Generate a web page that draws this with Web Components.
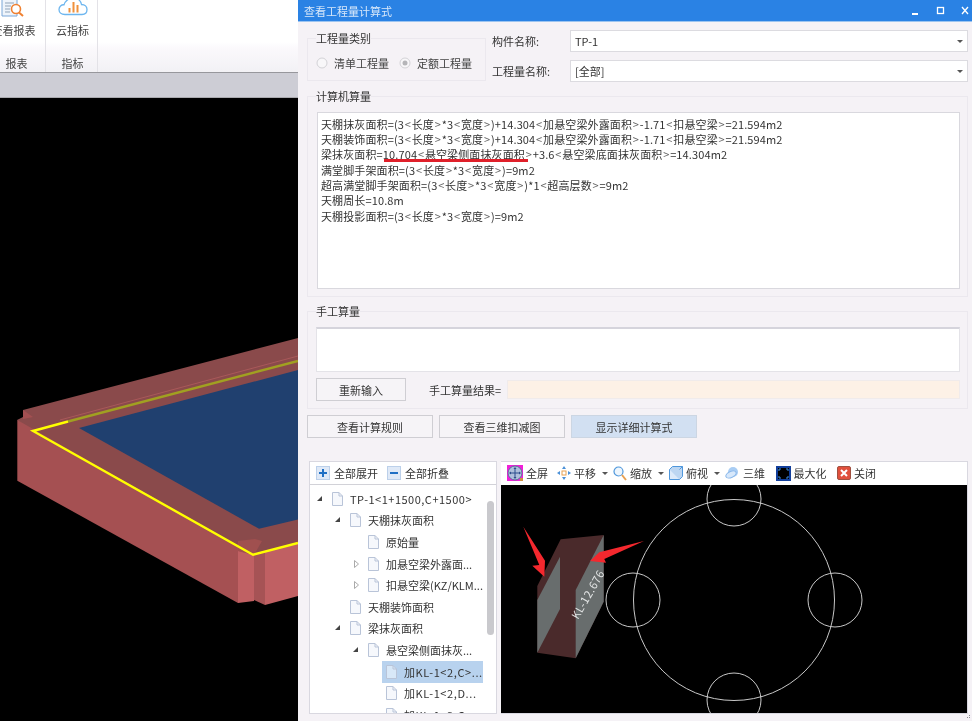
<!doctype html>
<html lang="zh">
<head>
<meta charset="utf-8">
<title>查看工程量计算式</title>
<style>
  html, body { margin: 0; width: 972px; height: 721px; overflow: hidden; background: #000; }
  body { font: 11px "Noto Sans CJK SC", "Liberation Sans", sans-serif; color: #333; }
  /* the reference is a slightly soft, upscaled capture */
  #page { display: grid; grid-template-columns: 298px 674px; height: 721px; filter: blur(.35px); }
  #left { display: flex; flex-direction: column; height: 721px; min-width: 0; }
</style>
</head>
<body>
<div id="page">
  <div id="left">
    <app-ribbon>
      <ribbon-group name="报表" label="查看报表" width="46" pad="padding-right:12px" style="--label-shift:-6px">
        <svg slot="icon" width="26" height="20" viewBox="0 0 26 20" style="margin-left:-12px">
          <path d="M4 -3H19V16H4Z" fill="#eef4fb" stroke="#7aa7d8"/>
          <path d="M7 3H16M7 6H13M7 9H12M7 12H12" stroke="#8fa3b8"/>
          <circle cx="18" cy="9" r="4.500" fill="#fff" stroke="#f08030" stroke-width="1.600"/>
          <path d="M21 12.500L25 16" stroke="#f08030" stroke-width="2"/>
        </svg>
      </ribbon-group>
      <ribbon-group name="指标" label="云指标" width="52" pad="padding-left:2px">
        <svg slot="icon" width="30" height="20" viewBox="0 0 30 20">
          <path d="M7 14.500C3 14.500 1 12 1 9.500C1 6.500 3.500 4.500 6 4.800C7 1 11 -2 15 -2C20 -2 23 1 23.500 4.500C27 4.500 29 7 29 9.500C29 12.500 27 14.500 24 14.500Z" fill="#fff" stroke="#6db6ef" stroke-width="1.300"/>
          <path d="M11.500 8V12.500M15.500 2V12.500M19.500 5V12.500" stroke="#f0913c" stroke-width="2"/>
        </svg>
      </ribbon-group>
    </app-ribbon>
    <model-scene></model-scene>
  </div>
  <calc-dialog heading="查看工程量计算式">
    <div slot="top" style="display:contents">
      <group-box label="工程量类别" style="margin-top:8px;height:43px">
        <div style="display:flex;padding:9px 0 0 8px;gap:10px">
          <ui-radio>清单工程量</ui-radio>
          <ui-radio checked>定额工程量</ui-radio>
        </div>
      </group-box>
      <div style="display:grid;gap:8px">
        <combo-field label="构件名称:" value="TP-1"></combo-field>
        <combo-field label="工程量名称:" value="[全部]"></combo-field>
      </div>
    </div>
    <group-box slot="computed" label="计算机算量" style="height:201px">
      <formula-box>
        <formula-line text="天棚抹灰面积=(3<长度>*3<宽度>)+14.304<加悬空梁外露面积>-1.71<扣悬空梁>=21.594m2"></formula-line>
        <formula-line text="天棚装饰面积=(3<长度>*3<宽度>)+14.304<加悬空梁外露面积>-1.71<扣悬空梁>=21.594m2"></formula-line>
        <formula-line text="梁抹灰面积=[10.704<悬空梁侧面抹灰面积>]+3.6<悬空梁底面抹灰面积>=14.304m2"></formula-line>
        <formula-line text="满堂脚手架面积=(3<长度>*3<宽度>)=9m2"></formula-line>
        <formula-line text="超高满堂脚手架面积=(3<长度>*3<宽度>)*1<超高层数>=9m2"></formula-line>
        <formula-line text="天棚周长=10.8m"></formula-line>
        <formula-line text="天棚投影面积=(3<长度>*3<宽度>)=9m2"></formula-line>
      </formula-box>
    </group-box>
    <group-box slot="manual" label="手工算量" style="height:98px">
      <manual-input></manual-input>
    </group-box>
    <div slot="actions" style="display:contents">
      <ui-button>查看计算规则</ui-button>
      <ui-button>查看三维扣减图</ui-button>
      <ui-button active>显示详细计算式</ui-button>
    </div>
    <tree-panel slot="tree">
      <tree-row level="0" toggle="open" style="letter-spacing:.5px">TP-1&lt;1+1500,C+1500&gt;</tree-row>
      <tree-row level="1" toggle="open">天棚抹灰面积</tree-row>
      <tree-row level="2">原始量</tree-row>
      <tree-row level="2" toggle="closed">加悬空梁外露面...</tree-row>
      <tree-row level="2" toggle="closed">扣悬空梁(KZ/KLM...</tree-row>
      <tree-row level="1">天棚装饰面积</tree-row>
      <tree-row level="1" toggle="open">梁抹灰面积</tree-row>
      <tree-row level="2" toggle="open">悬空梁侧面抹灰...</tree-row>
      <tree-row level="3" selected style="letter-spacing:.6px">加KL-1&lt;2,C&gt;...</tree-row>
      <tree-row level="3" style="letter-spacing:.6px">加KL-1&lt;2,D...</tree-row>
      <tree-row level="3" style="letter-spacing:.6px">加KL-1&lt;3,C...</tree-row>
    </tree-panel>
    <section-view slot="view"></section-view>
  </calc-dialog>
</div>

<script>
// small helper so each element only declares its css and markup
function shadow(el, css, html) {
  el.attachShadow({ mode: "open" }).innerHTML = "<style>" + css + "</style>" + html;
}

class AppRibbon extends HTMLElement {
  connectedCallback() {
    shadow(this, `
      :host { display: block; flex: none; }
      .bar { display: flex; height: 72px; border-bottom: 1px solid #97979c;
        background: linear-gradient(#fff 0, #fff 42px, #fbf9fc 48px, #f2f1f5 72px); }
      .strip { height: 24px; background: #cdcdd5; border-bottom: 1px solid #a9a9ae; }
    `, `<div class="bar"><slot></slot></div><div class="strip"></div>`);
  }
}

class RibbonGroup extends HTMLElement {
  connectedCallback() {
    shadow(this, `
      :host { display: flex; flex-direction: column; align-items: center; overflow: hidden;
        width: ${this.getAttribute("width")}px; border-right: 1px solid #e3e2e7; box-sizing: border-box;
        color: #444; font-size: 11px; ${this.getAttribute("pad") || ""} }
      .icon { height: 21px; display: block; }
      .label { margin-top: 1px; margin-left: var(--label-shift, 0); line-height: 16px; white-space: nowrap; }
      .name { margin-top: 17px; line-height: 16px; white-space: nowrap; }
    `, `<div class="icon"><slot name="icon"></slot></div>
        <div class="label">${this.getAttribute("label")}</div><div class="name">${this.getAttribute("name")}</div>`);
  }
}

class ModelScene extends HTMLElement {
  connectedCallback() {
    shadow(this, `
      :host { display: block; flex: 1; background: #000; min-height: 0; }
      svg { display: block; }
    `, `<svg width="298" height="623" viewBox="0 98 298 623">
      <polygon points="17,420 23,417 23,410 298,338 298,545 254,556 33,433" fill="#8a4a4b"/>
      <polygon points="23,410 33,417 23,419" fill="#a35052"/>
      <line x1="60" y1="420" x2="298" y2="356" stroke="#a9595a"/>
      <polygon points="79,428 298,370 298,519.500 259,528.700" fill="#20406f"/>
      <polygon points="17.300,420 254,555 238,603 17.300,480.700" fill="#a55052"/>
      <polygon points="238,551 254,555 254,601 238,603" fill="#c06063"/>
      <polygon points="238,541 255,539 262,541 254,555 238,551" fill="#a0504f"/>
      <polygon points="254,555 265,552 265,605 254,600" fill="#a65355"/>
      <polygon points="265,552 298,543 298,596 265,605" fill="#c06063"/>
      <polyline points="68,421.500 298,361" fill="none" stroke="#a1a021" stroke-width="2.400"/>
      <polyline points="68,421.500 33,431 253,554.700 298,543" fill="none" stroke="#ffff00" stroke-width="2.400"/>
    </svg>`);
  }
}

class CalcDialog extends HTMLElement {
  connectedCallback() {
    shadow(this, `
      :host { display: block; position: relative; background: #f5f2f6; height: 721px; font-size: 11px; color: #333; }
      .title { height: 21px; background: #2a82e4; border-bottom: 1px solid #9cc4f0; display: flex; align-items: center;
        padding: 0 0 0 6px; color: #d8e8fa; }
      .title span { flex: 1; }
      .title svg { display: block; }
      .top { display: grid; grid-template-columns: 179px 1fr; column-gap: 6px; padding: 8px 4px 0 9px; height: 51px; }
      .stack { display: grid; padding: 15px 4px 0 9px; gap: 14px; }
      .actions { display: flex; gap: 6px; padding: 6px 0 0 9px; }
      .bottom { display: grid; grid-template-columns: 188px 467px; column-gap: 4px; padding: 23px 0 0 11px; height: 253px; }
      .grip { position: absolute; right: 1px; bottom: 1px; display: block; }
    `, `<div class="title"><span>${this.getAttribute("heading")}</span>
          <svg width="64" height="12" viewBox="0 0 64 12" fill="none" stroke="#fff">
            <path d="M4 9H10" stroke-width="2"/>
            <rect x="29.500" y="2.500" width="6" height="6" stroke-width="1.300"/>
            <path d="M54 2L60 9M60 2L54 9" stroke-width="1.300"/>
          </svg></div>
        <div class="top"><slot name="top"></slot></div>
        <div class="stack"><slot name="computed"></slot><slot name="manual"></slot></div>
        <div class="actions"><slot name="actions"></slot></div>
        <div class="bottom"><slot name="tree"></slot><slot name="view"></slot></div>
        <svg class="grip" width="5" height="5" viewBox="0 0 5 5" fill="#8d8d92"><rect x="3" width="1" height="1"/><rect x="1" y="2" width="1" height="1"/><rect x="3" y="2" width="1" height="1"/></svg>`);
  }
}

class GroupBox extends HTMLElement {
  connectedCallback() {
    shadow(this, `
      :host { display: block; box-sizing: border-box; border: 1px solid #ebe8ee; }
      .legend { display: block; width: fit-content; margin: -8px 0 0 8px; padding: 0; background: #f5f2f6;
        line-height: 15px; height: 15px; color: #333; }
    `, `<span class="legend">${this.getAttribute("label")}</span><slot></slot>`);
  }
}

class UiRadio extends HTMLElement {
  connectedCallback() {
    const dot = this.hasAttribute("checked") ? `<circle cx="6" cy="6" r="2.500" fill="#b5b5b8"/>` : "";
    shadow(this, `
      :host { display: flex; align-items: center; gap: 6px; line-height: 16px; color: #444; }
      svg { display: block; }
    `, `<svg width="12" height="12" viewBox="0 0 12 12">
          <circle cx="6" cy="6" r="5" fill="#f8f7f9" stroke="#d3d2d6"/>${dot}</svg><slot></slot>`);
  }
}

class ComboField extends HTMLElement {
  connectedCallback() {
    shadow(this, `
      :host { display: grid; grid-template-columns: 78px 1fr; align-items: center; height: 22px; }
      .box { height: 22px; box-sizing: border-box; border: 1px solid #dcdbe0; background: #fff; display: flex;
        align-items: center; padding: 0 4px; justify-content: space-between; }
      .caret { width: 0; height: 0; border: 3px solid transparent; border-top: 3px solid #555; border-bottom: 0; }
    `, `<span>${this.getAttribute("label")}</span>
        <div class="box"><span>${this.getAttribute("value")}</span><i class="caret"></i></div>`);
  }
}

class FormulaBox extends HTMLElement {
  connectedCallback() {
    shadow(this, `
      :host { display: block; box-sizing: border-box; margin: 8px 7px 0 9px; height: 177px;
        background: #fff; border: 1px solid #d9d8de; padding: 3.500px 0 0 3px; }
    `, `<slot></slot>`);
  }
}

// text attribute: <..> get wider spacing, [..] gets the red mark under it
class FormulaLine extends HTMLElement {
  connectedCallback() {
    const html = this.getAttribute("text")
      .replace(/[<>]/g, (m) => "<b>" + (m === "<" ? "&lt;" : "&gt;") + "</b>")
      .replace("[", '<span class="mark">')
      .replace("]", "<i></i></span>");
    shadow(this, `
      :host { display: block; height: 15.400px; line-height: 15.400px; white-space: nowrap; color: #333;
        font-size: 11px; letter-spacing: .12px; }
      b { font-weight: normal; padding: 0 .75px; color: #666; }
      .mark { position: relative; }
      .mark i { position: absolute; left: 1px; right: 5px; top: 13px; height: 2.400px; background: #e0202a; }
    `, html);
  }
}

class ManualInput extends HTMLElement {
  connectedCallback() {
    shadow(this, `
      :host { display: block; padding: 8px 7px 0 8px; }
      .area { height: 45px; box-sizing: border-box; background: #fff; border: 1px solid #e4e3e8; border-top: 2px solid #d5d4dc; }
      .row { display: flex; align-items: center; margin-top: 6px; }
      button { width: 90px; height: 23px; box-sizing: border-box; background: #f6f4f7; border: 1px solid #cfced3;
        font: inherit; color: #333; padding: 0; }
      .lab { margin-left: 23px; width: 78px; }
      .res { flex: 1; height: 19px; box-sizing: border-box; background: #fdf1e6; border: 1px solid #f0ebeb; }
    `, `<div class="area"></div>
        <div class="row"><button>重新输入</button><span class="lab">手工算量结果=</span><div class="res"></div></div>`);
  }
}

class UiButton extends HTMLElement {
  connectedCallback() {
    const on = this.hasAttribute("active");
    shadow(this, `
      :host { display: block; }
      button { display: block; width: 126px; height: 23px; padding: 0; box-sizing: border-box; font: inherit; color: #333;
        background: ${on ? "#d2e0f2" : "#f6f4f7"}; border: 1px solid ${on ? "#ccd6e3" : "#cfced3"}; }
    `, `<button><slot></slot></button>`);
  }
}

class TreePanel extends HTMLElement {
  connectedCallback() {
    shadow(this, `
      :host { display: block; height: 253px; box-sizing: border-box; border: 1px solid #d9d8e0; background: #fff;
        overflow: hidden; position: relative; }
      .tools { display: flex; align-items: center; height: 23px; border-bottom: 1px solid #d2d2d8; box-sizing: border-box;
        padding: 0 0 1px 6px; gap: 9px; background: #fff; }
      .tool { display: flex; align-items: center; gap: 4px; }
      svg { display: block; }
      .rows { padding: 3px 13px 0 0; }
      .thumb { position: absolute; left: 177px; top: 39px; width: 7px; height: 134px; border-radius: 4px; background: #c9c9cd; }
    `, `<div class="tools">
          <span class="tool"><svg width="14" height="14" viewBox="0 0 14 14"><rect x=".5" y=".5" width="13" height="13" fill="#dfe9f7" stroke="#bcd0ea"/><path d="M7 3V11M3 7H11" stroke="#1f6fc4" stroke-width="2"/></svg>全部展开</span>
          <span class="tool"><svg width="14" height="14" viewBox="0 0 14 14"><rect x=".5" y=".5" width="13" height="13" fill="#dfe9f7" stroke="#bcd0ea"/><path d="M3 7H11" stroke="#1f6fc4" stroke-width="2"/></svg>全部折叠</span>
        </div>
        <div class="rows"><slot></slot></div><div class="thumb"></div>`);
  }
}

class TreeRow extends HTMLElement {
  connectedCallback() {
    const level = Number(this.getAttribute("level")) || 0;
    const toggle = this.getAttribute("toggle");
    const sel = this.hasAttribute("selected");
    let arrow = "";
    if (toggle === "open") arrow = `<path d="M7 2V7H2Z" fill="#444"/>`;
    if (toggle === "closed") arrow = `<path d="M3.500 1.500L7.500 5L3.500 8.500Z" fill="#fff" stroke="#aaa"/>`;
    shadow(this, `
      :host { display: flex; align-items: center; height: 21.600px; padding-left: ${5 + level * 18}px; white-space: nowrap; }
      .arrow { width: 17px; flex: none; display: block; }
      .item { flex: 1; display: flex; align-items: center; gap: 7px; height: 22px; margin-left: -4px; padding-left: 4px;
        background: ${sel ? "#b8d2ee" : "transparent"}; min-width: 0; overflow: hidden; }
      .file { flex: none; display: block; }
    `, `<svg class="arrow" width="17" height="10" viewBox="0 0 17 10">${arrow}</svg>
        <div class="item">
          <svg class="file" width="11" height="14" viewBox="0 0 11 14">
            <path d="M.5 .5H7L10.500 4V13.500H.5Z" fill="${sel ? "#d8e8f8" : "#f6f8fc"}" stroke="#b9c4d8"/>
            <path d="M7 .5V4H10.500" fill="none" stroke="#b9c4d8"/>
          </svg><span><slot></slot></span>
        </div>`);
  }
}

class SectionView extends HTMLElement {
  connectedCallback() {
    const caret = `<i class="caret"></i>`;
    shadow(this, `
      :host { display: flex; flex-direction: column; height: 253px; box-sizing: border-box; border: 1px solid #d9d8e0; border-left: 0; overflow: hidden; }
      .tools { display: flex; align-items: center; height: 23px; box-sizing: border-box; flex: none; background: #fff; padding: 0 0 1px 6px; color: #333; }
      .tool { display: flex; align-items: center; gap: 3px; margin-right: 9px; }
      .tool.c { margin-right: 5px; }
      .tool.w { margin-right: 10.500px; }
      .caret { width: 0; height: 0; border: 3px solid transparent; border-top: 3px solid #555; border-bottom: 0; margin-left: 3px; }
      svg { display: block; }
      .canvas { flex: 1; background: #000; min-height: 0; }
    `, `<div class="tools">
        <span class="tool"><svg width="16" height="16" viewBox="0 0 16 16"><rect width="16" height="16" fill="#f01fd8"/><circle cx="8" cy="8" r="7" fill="#aebfdc" stroke="#5a7098"/><path d="M8 3.500V12.500M3.500 8H12.500" stroke="#2b4c8c"/><path d="M8 2L6.500 4H9.500ZM8 14L6.500 12H9.500ZM2 8L4 6.500V9.500ZM14 8L12 6.500V9.500Z" fill="#2b4c8c"/><rect x="13" y="13" width="3" height="3" fill="#d09040"/></svg>全屏</span>
        <span class="tool c"><svg width="14" height="14" viewBox="0 0 14 14"><rect x="5" y="5" width="4" height="4" fill="#fff" stroke="#e8a050"/><path d="M7 0L5 3H9ZM7 14L5 11H9ZM0 7L3 5V9ZM14 7L11 5V9Z" fill="#4a90d8"/></svg>平移${caret}</span>
        <span class="tool c"><svg width="14" height="15" viewBox="0 0 14 15"><circle cx="5.500" cy="5.500" r="4.500" fill="#eef6fd" stroke="#4f97dc" stroke-width="1.200"/><path d="M9 9L13 14" stroke="#e8a050" stroke-width="2"/></svg>缩放${caret}</span>
        <span class="tool c"><svg width="14" height="14" viewBox="0 0 14 14"><path d="M.5 3.500H10.500V13.500H.5Z" fill="#dceafa" stroke="#4f97dc"/><path d="M.5 3.500L3.500 .5H13.500V10.500L10.500 13.500M10.500 3.500L13.500 .5" fill="#bcd6f2" stroke="#4f97dc"/></svg>俯视${caret}</span>
        <span class="tool w"><svg width="15" height="14" viewBox="0 0 15 14"><circle cx="8" cy="6" r="5" fill="#a9cdf4"/><ellipse cx="6" cy="8.500" rx="5.500" ry="3" fill="#d7e8fb" stroke="#8bb8ea" transform="rotate(-25 6 8.500)"/></svg>三维</span>
        <span class="tool w"><svg width="15" height="15" viewBox="0 0 15 15"><rect width="15" height="15" fill="#123f9c"/><rect x="2" y="2" width="11" height="11" fill="#000"/><path d="M3 5V3H5M10 3H12V5M12 10V12H10M5 12H3V10" fill="none" stroke="#3f8fe0"/></svg>最大化</span>
        <span class="tool"><svg width="14" height="14" viewBox="0 0 14 14"><rect x=".5" y=".5" width="13" height="13" rx="1.500" fill="#e0503c" stroke="#a05040"/><path d="M4 4L10 10M10 4L4 10" stroke="#fff" stroke-width="2"/></svg>关闭</span>
      </div>
      <div class="canvas"><svg width="466" height="228" viewBox="501 485 466 228" fill="none" stroke="#c8c8c8">
        <circle cx="734" cy="600" r="100.500"/>
        <circle cx="734" cy="499" r="27"/>
        <circle cx="734" cy="700" r="27"/>
        <circle cx="633" cy="600" r="27"/>
        <circle cx="835" cy="600" r="27"/>
        <polygon points="537.300,586 560.700,539.300 603.700,535 603.700,601.700 575.700,658.300 537.300,652.700" fill="#4a2a2b" stroke="none"/>
        <polygon points="537.300,600 560,556.700 560,609 537.300,652.700" fill="#686d6d" stroke="none"/>
        <polygon points="575.700,590 603.700,535 603.700,601.700 575.700,658.300" fill="#686d6d" stroke="none"/>
        <polygon points="523.300,526.700 545,560.700 544.300,576.700 532.300,565.700 539.300,565" fill="#f4282e" stroke="none"/>
        <polygon points="644,541 599.300,552.300 590,561 606,562.700 604.300,559" fill="#f4282e" stroke="none"/>
        <text x="0" y="0" transform="translate(578,620) rotate(-60)" fill="#e4e6e6" stroke="none" font-size="11" letter-spacing=".5" font-family="'Noto Sans CJK SC','Liberation Sans',sans-serif">KL-12.676</text>
      </svg></div>`);
  }
}

customElements.define("app-ribbon", AppRibbon);
customElements.define("ribbon-group", RibbonGroup);
customElements.define("model-scene", ModelScene);
customElements.define("calc-dialog", CalcDialog);
customElements.define("group-box", GroupBox);
customElements.define("ui-radio", UiRadio);
customElements.define("combo-field", ComboField);
customElements.define("formula-box", FormulaBox);
customElements.define("formula-line", FormulaLine);
customElements.define("manual-input", ManualInput);
customElements.define("ui-button", UiButton);
customElements.define("tree-panel", TreePanel);
customElements.define("tree-row", TreeRow);
customElements.define("section-view", SectionView);
</script>
</body>
</html>
